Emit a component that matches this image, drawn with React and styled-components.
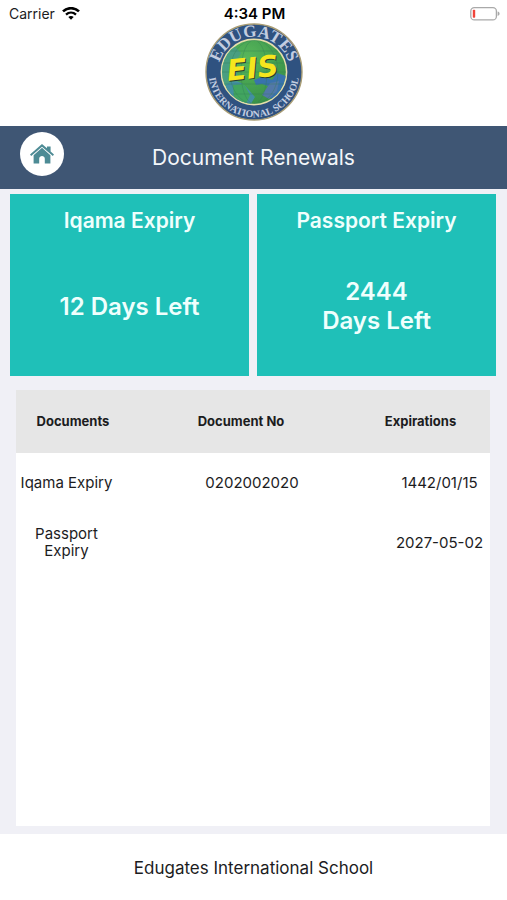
import React from "react";
import styled, { createGlobalStyle } from "styled-components";

const cards = [
  { title: "Iqama Expiry", value: ["12 Days Left"] },
  { title: "Passport Expiry", value: ["2444", "Days Left"] },
];

const documents = [
  { name: "Iqama Expiry", number: "0202002020", expires: "1442/01/15" },
  { name: "Passport Expiry", number: "", expires: "2027-05-02" },
];

const WifiIcon = () => (
  <svg width="18" height="14" viewBox="0 0 18 14" fill="none" aria-label="Wi-Fi">
    <path d="M1 4.4C5.4 0.1 12.6 0.1 17 4.4" stroke="#000" strokeWidth="2.6" />
    <path d="M4 7.7C6.9 5 11.1 5 14 7.7" stroke="#000" strokeWidth="2.3" />
    <path d="M9 12.8L6.3 10C7.8 8.6 10.2 8.6 11.7 10Z" fill="#000" />
  </svg>
);

const BatteryIcon = () => (
  <svg width="30" height="14" viewBox="0 0 30 14" fill="none" aria-label="Battery">
    <rect x="0.8" y="0.7" width="25.6" height="12.2" rx="3.5" stroke="#a9a9a9" strokeWidth="1.3" />
    <rect x="2.8" y="2.8" width="2.4" height="8" rx="0.8" fill="#f0443a" />
    <path d="M27.6 4.6C30.2 5.2 30.2 8.4 27.6 9Z" fill="#a9a9a9" />
  </svg>
);

const HomeIcon = () => (
  <svg width="24" height="20" viewBox="0 0 24 20" fill="#4d8b95" aria-hidden="true">
    <path d="M12 0L17 4.3V2.6H20.6V7.5L24 10.6L22.8 12L12 2.7L1.2 12L0 10.6Z" />
    <path d="M12 3.8L20.4 11.2V19.6H14.8V14.8C14.8 11.1 9.2 11.1 9.2 14.8V19.6H3.6V11.2Z" />
  </svg>
);

const SchoolLogo = () => (
  <Logo width="98" height="98" viewBox="0 0 98 98" role="img" aria-label="Edugates International School">
    <defs>
      <path id="topArc" d="M14.8 61A36 36 0 1 1 83.2 61" />
      <path id="bottomArc" d="M4.6 40A45.3 45.3 0 1 0 93.4 40" />
      <clipPath id="globe">
        <circle cx="49" cy="49" r="32" />
      </clipPath>
      <radialGradient id="land" cx="0.4" cy="0.3" r="0.8">
        <stop offset="0" stopColor="#59b85c" />
        <stop offset="1" stopColor="#358c46" />
      </radialGradient>
    </defs>
    <circle cx="49" cy="49" r="48" fill="#2f5280" stroke="#a99d75" strokeWidth="1.4" />
    <circle cx="49" cy="49" r="32.6" fill="url(#land)" stroke="#e6dfab" strokeWidth="1.6" />
    <g clipPath="url(#globe)">
      <path d="M14 34L28 22L36 30L30 40L34 58L22 64L12 56Z" fill="#4a9f83" />
      <path d="M21 62C30 55 38 60 43 66L50 74L44 84H22Z" fill="#438fa2" />
      <path d="M49 57L59 53L67 57L72 50L84 54L79 71L68 77L60 71L66 64L57 61L51 62Z" fill="#3974ad" />
      <path d="M65 60L74 58L72 68L64 76L57 72Z" fill="#5378a8" />
      <path d="M28 62L39 61L45 72L41 81L29 74Z" fill="#42a560" />
      <g fill="none" stroke="#317a55" strokeWidth="0.6" opacity="0.6">
        <ellipse cx="49" cy="49" rx="13" ry="32" />
        <ellipse cx="49" cy="49" rx="24" ry="32" />
        <path d="M17 40H81M17 49H81M20 61H78M24 28H74M28 71H70" />
      </g>
    </g>
    <LogoInitials x="49" y="56" fill="#273c2e">EIS</LogoInitials>
    <LogoInitials x="48" y="55" fill="#f5e61e">EIS</LogoInitials>
    <LogoText $size={17}>
      <textPath href="#topArc" startOffset="50%">EDUGATES</textPath>
    </LogoText>
    <LogoText $size={10}>
      <textPath href="#bottomArc" startOffset="50%">INTERNATIONAL SCHOOL</textPath>
    </LogoText>
  </Logo>
);

const App = () => {
  return (
    <Page>
      <GlobalStyle />
      <TopBar>
        <StatusBar>
          <Carrier>
            Carrier
            <WifiIcon />
          </Carrier>
          <Time>4:34 PM</Time>
          <Battery>
            <BatteryIcon />
          </Battery>
        </StatusBar>
        <SchoolLogo />
      </TopBar>
      <Header>
        <HomeButton type="button" aria-label="Home">
          <HomeIcon />
        </HomeButton>
        <Title>Document Renewals</Title>
      </Header>
      <Main>
        <Cards>
          {cards.map((card) => (
            <Card key={card.title}>
              <CardTitle>{card.title}</CardTitle>
              <CardValue>
                {card.value.map((line) => (
                  <span key={line}>{line}</span>
                ))}
              </CardValue>
            </Card>
          ))}
        </Cards>
        <Panel>
          <Table>
            <colgroup>
              <Column $width="101px" />
              <Column />
              <Column $width="113px" />
            </colgroup>
            <thead>
              <tr>
                <HeadCell $left={13}>Documents</HeadCell>
                <HeadCell $right={12}>Document No</HeadCell>
                <HeadCell $right={26}>Expirations</HeadCell>
              </tr>
            </thead>
            <tbody>
              {documents.map((doc) => (
                <tr key={doc.name}>
                  <Cell>{doc.name}</Cell>
                  <Cell $left={12}>{doc.number}</Cell>
                  <Cell $left={14}>{doc.expires}</Cell>
                </tr>
              ))}
            </tbody>
          </Table>
        </Panel>
      </Main>
      <Footer>Edugates International School</Footer>
    </Page>
  );
};

export default App;

const GlobalStyle = createGlobalStyle`
  * {
    box-sizing: border-box;
  }
  body {
    margin: 0;
    font-family: Inter, "Liberation Sans", sans-serif;
    color: #1c1c1e;
  }
`;

const Page = styled.div`
  display: flex;
  flex-direction: column;
  min-height: 100vh;
  background-color: #f0f0f6;
`;

const TopBar = styled.div`
  display: flex;
  flex-direction: column;
  align-items: center;
  padding-bottom: 5px;
  background-color: white;
`;

const StatusBar = styled.div`
  display: grid;
  grid-template-columns: 1fr auto 1fr;
  align-items: center;
  width: 100%;
  padding: 4px 7px 0 9px;
  font-size: 14px;
  line-height: 19px;
`;

const Carrier = styled.div`
  display: flex;
  align-items: center;
  gap: 7px;
`;

const Time = styled.div`
  color: black;
  font-size: 15px;
  font-weight: 600;
`;

const Battery = styled.div`
  display: flex;
  justify-content: flex-end;
`;

const Logo = styled.svg`
  overflow: visible;
`;

const LogoInitials = styled.text`
  font-family: "DejaVu Sans", sans-serif;
  font-size: 29px;
  font-weight: 700;
  font-style: italic;
  text-anchor: middle;
  transform: rotate(-6deg);
  transform-origin: 49px 49px;
`;

const LogoText = styled.text`
  font-family: "Liberation Serif", serif;
  font-size: ${({ $size }) => $size}px;
  font-weight: 700;
  text-anchor: middle;
  fill: #c3cde0;
`;

const Header = styled.header`
  display: grid;
  grid-template-columns: 44px 1fr 44px;
  align-items: center;
  min-height: 63px;
  padding: 6px 20px;
  background-color: #3f5674;
`;

const HomeButton = styled.button`
  display: flex;
  align-items: center;
  justify-content: center;
  align-self: start;
  width: 44px;
  height: 44px;
  padding: 0;
  border: none;
  border-radius: 50%;
  background-color: white;
  cursor: pointer;
`;

const Title = styled.h1`
  margin: 0;
  color: #f3f6fa;
  font-size: 21px;
  font-weight: 400;
  line-height: 29px;
  text-align: center;
`;

const Main = styled.main`
  display: flex;
  flex: 1;
  flex-direction: column;
  gap: 14px;
  padding: 5px 11px 8px 10px;
`;

const Cards = styled.section`
  display: grid;
  grid-template-columns: 1fr 1fr;
  gap: 8px;
`;

const Card = styled.article`
  display: flex;
  flex-direction: column;
  min-height: 182px;
  padding: 12px 12px 0;
  background-color: #1fc0b8;
  color: #effffd;
  text-align: center;
`;

const CardTitle = styled.h2`
  margin: 0;
  font-size: 21px;
  font-weight: 600;
  line-height: 30px;
`;

const CardValue = styled.p`
  display: flex;
  flex: 1;
  flex-direction: column;
  justify-content: center;
  margin: 0;
  font-size: 24px;
  font-weight: 600;
  line-height: 29px;
`;

const Panel = styled.section`
  flex: 1;
  margin: 0 6px;
  background-color: white;
`;

const Table = styled.table`
  width: 100%;
  table-layout: fixed;
  border-collapse: collapse;
  text-align: center;
`;

const Column = styled.col`
  width: ${({ $width }) => $width || "auto"};
`;

const HeadCell = styled.th`
  height: 63px;
  padding: 0 ${({ $right }) => $right || 0}px 0 ${({ $left }) => $left || 0}px;
  background-color: #e6e6e6;
  font-size: 13px;
  font-weight: 700;
  line-height: 17px;
  white-space: nowrap;
`;

const Cell = styled.td`
  height: 60px;
  padding: 0 2px 2px ${({ $left }) => $left || 2}px;
  font-size: 15px;
  line-height: 17px;
`;

const Footer = styled.footer`
  padding: 23px 12px 21px;
  background-color: white;
  font-size: 17px;
  line-height: 22px;
  text-align: center;
`;
